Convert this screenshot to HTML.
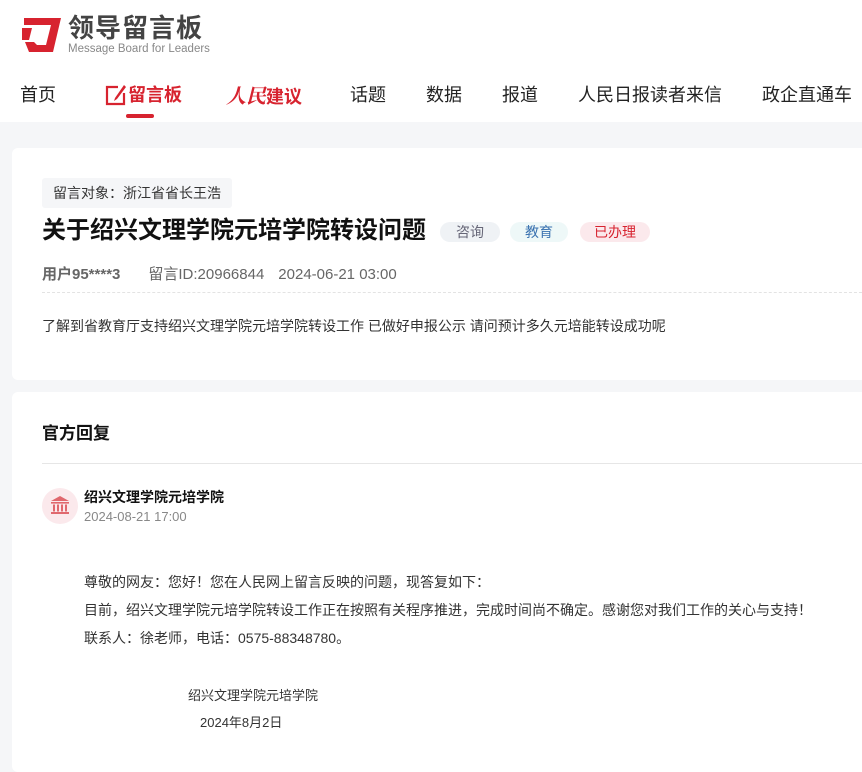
<!DOCTYPE html>
<html><head><meta charset="utf-8"><style>
*{margin:0;padding:0;box-sizing:border-box}
body{width:862px;height:755px;overflow:hidden;background:#f5f6f8;font-family:"Liberation Sans","Noto Sans CJK SC",sans-serif;color:#333;position:relative}
.hdr{position:absolute;left:0;top:0;width:862px;height:122px;background:#fff}
.abs{position:absolute;white-space:nowrap}
.nav{top:83px;font-size:18px;line-height:24px;color:#222}
.card{position:absolute;left:12px;width:870px;background:#fff;border-radius:6px}
.tag{position:absolute;top:222px;height:20px;border-radius:10px;font-size:14px;line-height:20px;text-align:center}
</style></head><body>
<div class="hdr">
<svg class="abs" style="left:20px;top:16px" width="42" height="38" viewBox="0 0 42 38">
<path d="M4 2H41L33 36H9L5 26H14L17 29H26L31 9H4Z" fill="#d7232f"/>
<path d="M2 12H12L9 24H2Z" fill="#d7232f"/>
</svg>
<div class="abs" style="left:68px;top:13px;font-size:26px;line-height:30px;font-weight:bold;color:#444;letter-spacing:1px">领导留言板</div>
<div class="abs" style="left:68px;top:43px;font-size:11.5px;line-height:13px;color:#888">Message Board for Leaders</div>
<div class="abs nav" style="left:20px">首页</div>
<svg class="abs" style="left:105px;top:84px" width="22" height="22" viewBox="0 0 22 22"><path d="M13 3H2V20H19V9" fill="none" stroke="#d7232f" stroke-width="2.2"/><path d="M19 1L10 14L9 17L12 15L21 3Z" fill="#d7232f"/></svg>
<div class="abs nav" style="left:128px;color:#d7232f;font-weight:bold">留言板</div>
<div class="abs" style="left:126px;top:114px;width:28px;height:4px;background:#d7232f;border-radius:2px"></div>
<div class="abs nav" style="left:226px;color:#d7232f;font-weight:bold;font-style:italic;font-family:'Noto Serif CJK SC',serif;font-size:20px">人民<span style="font-style:normal;font-family:'Noto Sans CJK SC',sans-serif;font-size:18px">建议</span></div>
<div class="abs nav" style="left:350px">话题</div>
<div class="abs nav" style="left:426px">数据</div>
<div class="abs nav" style="left:502px">报道</div>
<div class="abs nav" style="left:578px">人民日报读者来信</div>
<div class="abs nav" style="left:762px">政企直通车</div>
</div>

<div class="card" style="top:148px;height:232px"></div>
<div class="abs" style="left:42px;top:178px;height:30px;padding:0 11px;background:#f5f6f8;border-radius:3px;font-size:14px;line-height:30px;color:#333">留言对象：浙江省省长王浩</div>
<div class="abs" style="left:42px;top:215px;font-size:24px;line-height:32px;font-weight:bold;color:#111">关于绍兴文理学院元培学院转设问题</div>
<div class="tag" style="left:440px;width:60px;background:#eff2f5;color:#667">咨询</div>
<div class="tag" style="left:510px;width:58px;background:#eef8f8;color:#3a72b0">教育</div>
<div class="tag" style="left:580px;width:70px;background:#fbe9ec;color:#d7232f">已办理</div>
<div class="abs" style="left:42px;top:263px;font-size:15px;color:#666"><b>用户95****3</b><span style="margin-left:28px">留言ID:20966844</span><span style="margin-left:14px">2024-06-21 03:00</span></div>
<div class="abs" style="left:42px;top:292px;width:830px;border-top:1px dashed #e3e3e3"></div>
<div class="abs" style="left:42px;top:316px;font-size:14px;color:#333">了解到省教育厅支持绍兴文理学院元培学院转设工作 已做好申报公示 请问预计多久元培能转设成功呢</div>

<div class="card" style="top:392px;height:380px"></div>
<div class="abs" style="left:42px;top:419px;font-size:17px;font-weight:bold;color:#111">官方回复</div>
<div class="abs" style="left:42px;top:463px;width:830px;border-top:1px solid #e6e6e6"></div>
<div class="abs" style="left:42px;top:488px;width:36px;height:36px;border-radius:50%;background:#fbe9ec"></div>
<svg class="abs" style="left:50px;top:495px" width="20" height="20" viewBox="0 0 20 20" fill="#e0686e"><path d="M10 1L19 6H1Z"/><rect x="1" y="7" width="18" height="1.6"/><rect x="3" y="9.5" width="2" height="7"/><rect x="7" y="9.5" width="2" height="7"/><rect x="11" y="9.5" width="2" height="7"/><rect x="15" y="9.5" width="2" height="7"/><rect x="1" y="17" width="18" height="2"/></svg>
<div class="abs" style="left:84px;top:487px;font-size:14px;font-weight:bold;color:#111">绍兴文理学院元培学院</div>
<div class="abs" style="left:84px;top:509px;font-size:13px;color:#888">2024-08-21 17:00</div>
<div class="abs" style="left:84px;top:568px;font-size:14px;line-height:28px;color:#333">尊敬的网友：您好！您在人民网上留言反映的问题，现答复如下：<br>目前，绍兴文理学院元培学院转设工作正在按照有关程序推进，完成时间尚不确定。感谢您对我们工作的关心与支持！<br>联系人：徐老师，电话：0575-88348780。</div>
<div class="abs" style="left:188px;top:685px;font-size:13px;color:#333">绍兴文理学院元培学院</div>
<div class="abs" style="left:200px;top:712px;font-size:13px;color:#333">2024年8月2日</div>
</body></html>
